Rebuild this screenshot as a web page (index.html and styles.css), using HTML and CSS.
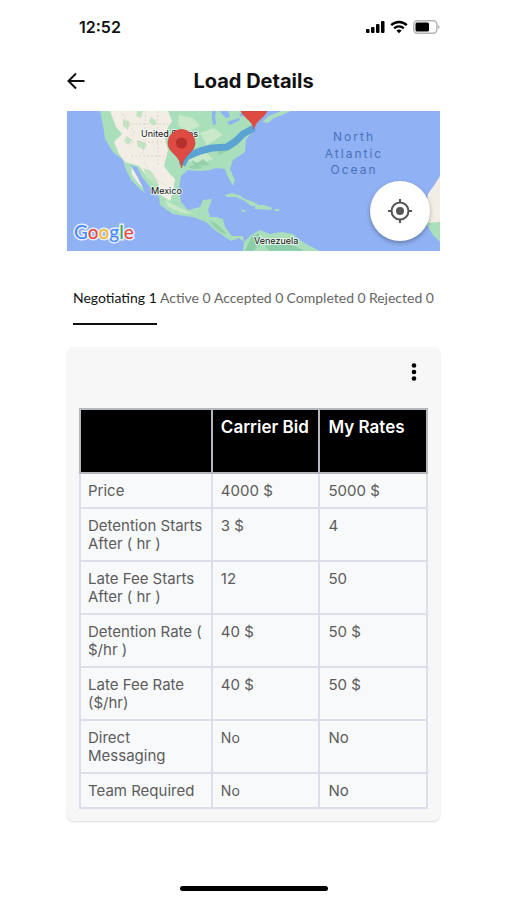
FILE: index.html
```
<!DOCTYPE html>
<html lang="en">
<head>
  <meta charset="UTF-8" />
  <meta name="viewport" content="width=device-width, initial-scale=1.0" />
  <title>Load Details</title>
  <link rel="stylesheet" href="styles.css">
</head>
<body>
  <div class="status-bar">
    <span class="clock">12:52</span>
    <div class="status-icons">
      <svg width="19" height="14" viewBox="0 0 19 14">
        <rect x="0" y="9" width="3.500" height="4" rx="1" />
        <rect x="5" y="7" width="3.500" height="6" rx="1" />
        <rect x="10" y="4" width="3.500" height="9" rx="1" />
        <rect x="15" y="1" width="3.500" height="12" rx="1" />
      </svg>
      <svg width="18" height="14" viewBox="0 0 18 14" fill="none" stroke="#000" stroke-width="2.4">
        <path d="M1.2 5.2a11 11 0 0 1 15.6 0M4.2 8.4a6.8 6.8 0 0 1 9.6 0" />
        <path d="M9 13.2 6.4 10.6a3.8 3.8 0 0 1 5.2 0z" fill="#000" stroke="none" />
      </svg>
      <svg width="27" height="14" viewBox="0 0 27 14">
        <rect x="0.8" y="0.8" width="23" height="12.4" rx="3.4" fill="#fff" stroke="#b5b5b5" stroke-width="1.5" />
        <rect x="2.5" y="2.5" width="13.5" height="9" rx="1.5" />
        <path d="M25 5c2 .6 2 3.400 0 4z" fill="#b5b5b5" />
      </svg>
    </div>
  </div>

  <header>
    <button class="back-btn" aria-label="Back">
      <svg width="18" height="18" viewBox="0 0 18 18" fill="none" stroke="#111" stroke-width="2">
        <path d="M17.500 9H2M9 1.500 1.500 9 9 16.500" />
      </svg>
    </button>
    <h1>Load Details</h1>
  </header>

  <main>
    <div class="map">
      <svg class="map-canvas" viewBox="0 0 373 140">
        <rect width="373" height="140" fill="#90b1f3" />
        <!-- North and Central America -->
        <path fill="#a9dfbb" d="M33 0 36 14 38 28 46 41 56 49 59 59 64 69 73 78 78 82 74 73 68 63 63 54 70 56 75 66 83 76 92 86 93 94 106 103 118 105 126 106 139 111 148 119 158 126 164 130 172 127 177 131 176 125 165 125 158 116 156 108 149 106 143 106 141 99 145 88 136 89 133 96 121 99 114 91 112 78 114 65 121 59 133 60 143 59 149 57 158 58 161 66 166 75 168 69 163 58 166 49 178 41 179 28 186 21 184 24 188 14 196 6 199 0z" />
        <path fill="#f3eee5" d="M43 0H101L105 10 97 23 101 39 97 55 103 63 108 68 106 80 103 90 94 84 91 72 81 67 72 55 58 51 52 43 47 31 55 23 49 16z" />
        <path fill="#f3eee5" d="M64 55 70 65 76 77 72 73 65 64z" />
        <path fill="#bfe5c3" d="M56 8l7 3-2 8-5-4zM70 0h6l-2 7-5-2zM71 29l9 4-3 6-7-4zM76 57l8 3 7 11-3 3-8-7zM60 25l5 4-4 5-4-4zM84 6l6 5-3 4-5-4z" />
        <path fill="#c9e9ca" d="M112 4l14 3 7 8-14 6-8-7zM133 22l14-5 9 7-16 10zM122 43l15-3 9 8-14 5-10-3zM98 89l13 7 15 7-10-1-15-6z" />
        <path fill="#94d0ab" d="M125 49l5 3 6-4 7 6-8 1-9-2zM151 39l9-7 10-6 5 3-11 9-12 6zM121 56l8-3 7 4-10 1zM143 109l9 6 8 8-5-1-9-7z" />
        <path fill="none" stroke="#d3cdbd" stroke-width=".7" stroke-dasharray="2 2" d="M56 3 67 21 62 39M79 0 76 42M91 0V54M65 31 104 31M64 45 101 45M56 13 103 13M77 51 85 65 99 75" />
        <path fill="#90b1f3" d="M145 0h4l-1 6 1 7-3 1-1-6zM153 0h8l2 6-4 1-3-3zM160 11l12-4 1 2-10 5zM172 3l8-3 2 1-8 5z" />
        <!-- Atlantic coast of Canada and the islands -->
        <path fill="#a9dfbb" d="M195 11 202 5 214 0H224L215 4 207 7 201 12zM158 84 165 82 172 84 178 88 187 91 193 95 184 95 178 90 169 86 160 86zM188 94 197 94 206 97 203 99 188 98zM174 98 180 100 175 101zM208 98h4v2h-4z" />
        <!-- South America -->
        <path fill="#a9dfbb" d="M176 140 177 131 184 124 193 119 203 123 214 121 226 123 233 129 241 134 253 140z" />
        <path fill="#8dceaa" d="M185 125l7-3 1 12-7 6h-8zM198 135l14-3 16 3 9 5h-34z" />
        <!-- Africa -->
        <path fill="#f3eee5" d="M373 65 368 73 361 83 359 95 361 112 373 113z" />
        <path fill="#a9dfbb" d="M359 112 373 111V131L366 124z" />
        <!-- Route -->
        <path fill="none" stroke="#5ba3d3" stroke-width="7" stroke-linejoin="round" d="M115 54 119 46 133 40 145 37 160 36 169 30 176 23 187 17" />
        <g class="place">
          <text x="74" y="26">United States</text>
          <text x="84" y="83">Mexico</text>
          <text x="187" y="133">Venezuela</text>
        </g>
        <g class="ocean">
          <text x="287" y="30">North</text>
          <text x="287" y="47">Atlantic</text>
          <text x="287" y="63">Ocean</text>
        </g>
        <g stroke="#c9443c" stroke-width=".7">
          <path fill="#de4b42" d="M114.500 57C113 43 101 42 101 32a13.500 13.500 0 0 1 27 0C128 42 116 43 114.500 57z" />
          <path fill="#de4b42" d="M174 0H200C197 7 188 10 187 18 186 10 177 7 174 0z" />
          <circle cx="114.500" cy="32" r="5.500" fill="#b5302c" stroke="none" />
        </g>
        <text class="google" x="7" y="128"><tspan fill="#4a8af4">G</tspan><tspan fill="#e94b3f">o</tspan><tspan fill="#f5ba2c">o</tspan><tspan fill="#4a8af4">g</tspan><tspan fill="#3ca75a">l</tspan><tspan fill="#e94b3f">e</tspan></text>
      </svg>
      <button class="locate-btn" aria-label="My location">
        <svg width="24" height="24" viewBox="0 0 24 24" fill="none" stroke="#555" stroke-width="2">
          <circle cx="12" cy="12" r="8.500" />
          <circle cx="12" cy="12" r="4" fill="#555" stroke="none" />
          <path d="M12 0v4M12 20v4M0 12h4M20 12h4" />
        </svg>
      </button>
    </div>

    <nav class="tabs">
      <button class="tab active">Negotiating 1</button>
      <button class="tab">Active 0</button>
      <button class="tab">Accepted 0</button>
      <button class="tab">Completed 0</button>
      <button class="tab">Rejected 0</button>
    </nav>

    <section class="card">
      <button class="menu-btn" aria-label="More options">
        <svg width="6" height="18" viewBox="0 0 6 18">
          <circle cx="3" cy="2.500" r="2.300" />
          <circle cx="3" cy="9" r="2.300" />
          <circle cx="3" cy="15.500" r="2.300" />
        </svg>
      </button>
      <table>
        <thead>
          <tr><th class="label-col"></th><th>Carrier Bid</th><th>My Rates</th></tr>
        </thead>
        <tbody>
          <tr><td>Price</td><td>4000 $</td><td>5000 $</td></tr>
          <tr><td>Detention Starts After ( hr )</td><td>3 $</td><td>4</td></tr>
          <tr><td>Late Fee Starts After ( hr )</td><td>12</td><td>50</td></tr>
          <tr><td>Detention Rate ( $/hr )</td><td>40 $</td><td>50 $</td></tr>
          <tr><td>Late Fee Rate ($/hr)</td><td>40 $</td><td>50 $</td></tr>
          <tr><td>Direct Messaging</td><td class="small">No</td><td>No</td></tr>
          <tr><td>Team Required</td><td class="small">No</td><td>No</td></tr>
        </tbody>
      </table>
    </section>
  </main>

  <div class="home-indicator"></div>
</body>
</html>
```
FILE: styles.css
```
* {
  margin: 0;
  padding: 0;
  box-sizing: border-box;
}

body {
  min-height: 100vh;
  display: flex;
  flex-direction: column;
  padding: 0 67px 9px;
  background: #fff;
  color: #111;
  font-family: Inter, sans-serif;
}

button {
  border: none;
  background: none;
  font: inherit;
  cursor: pointer;
}

svg {
  display: block;
}

.status-bar {
  display: flex;
  align-items: center;
  justify-content: space-between;
  height: 54px;
  padding-left: 12px;
}

.clock {
  font-size: 16px;
  font-weight: 600;
}

.status-icons {
  display: flex;
  align-items: center;
  gap: 5px;
}

header {
  display: grid;
  grid-template-columns: 18px 1fr 18px;
  align-items: center;
  height: 54px;
  margin-bottom: 3px;
}

h1 {
  font-size: 20px;
  font-weight: 700;
  text-align: center;
}

.map {
  position: relative;
}

.map-canvas {
  width: 100%;
}

.place {
  font-size: 9px;
  fill: #111;
  stroke: #fff;
  stroke-width: 2px;
  stroke-opacity: 0.7;
  paint-order: stroke;
}

.ocean {
  font-size: 12px;
  letter-spacing: 2px;
  text-anchor: middle;
  fill: #4972bd;
}

.google {
  font-family: Lato, sans-serif;
  font-size: 19px;
  font-weight: 500;
  stroke: #fff;
  stroke-width: 3px;
  stroke-opacity: 0.8;
  paint-order: stroke;
}

.locate-btn {
  position: absolute;
  right: 10px;
  bottom: 10px;
  width: 60px;
  height: 60px;
  display: flex;
  align-items: center;
  justify-content: center;
  border-radius: 50%;
  background: #fff;
  box-shadow: 0 2px 4px rgba(0, 0, 0, 0.3);
}

.tabs {
  display: flex;
  justify-content: space-between;
  margin: 38px 6px 0;
}

.tab {
  padding-bottom: 16px;
  border-bottom: 2px solid transparent;
  font-family: Lato, sans-serif;
  font-size: 14px;
  line-height: 18px;
  white-space: nowrap;
  color: #666;
}

.tab.active {
  border-color: #111;
  color: #111;
}

.card {
  margin-top: 22px;
  padding: 12px;
  border-radius: 7px;
  background: #f7f7f7;
  box-shadow: 0 1px 2px rgba(0, 0, 0, 0.15);
}

.menu-btn {
  display: flex;
  align-items: center;
  justify-content: center;
  width: 28px;
  height: 26px;
  margin: 0 0 23px auto;
}

table {
  width: 100%;
  table-layout: fixed;
  border-collapse: collapse;
  font-size: 15px;
  line-height: 18px;
}

th,
td {
  padding: 8px 8px 7px;
  border: 2px solid #dcdfe9;
  text-align: left;
  vertical-align: top;
}

td:first-child {
  padding-left: 7px;
}

th {
  height: 64px;
  background: #000;
  border-color: #b4b7bc;
  color: #fff;
  font-size: 17px;
  font-weight: 600;
}

td {
  background: #f8f9fa;
  color: #5c5c5c;
}

.label-col {
  width: 38%;
}

.small {
  font-size: 14px;
}

.home-indicator {
  width: 148px;
  height: 5px;
  margin: auto auto 0;
  border-radius: 3px;
  background: #000;
}
```
